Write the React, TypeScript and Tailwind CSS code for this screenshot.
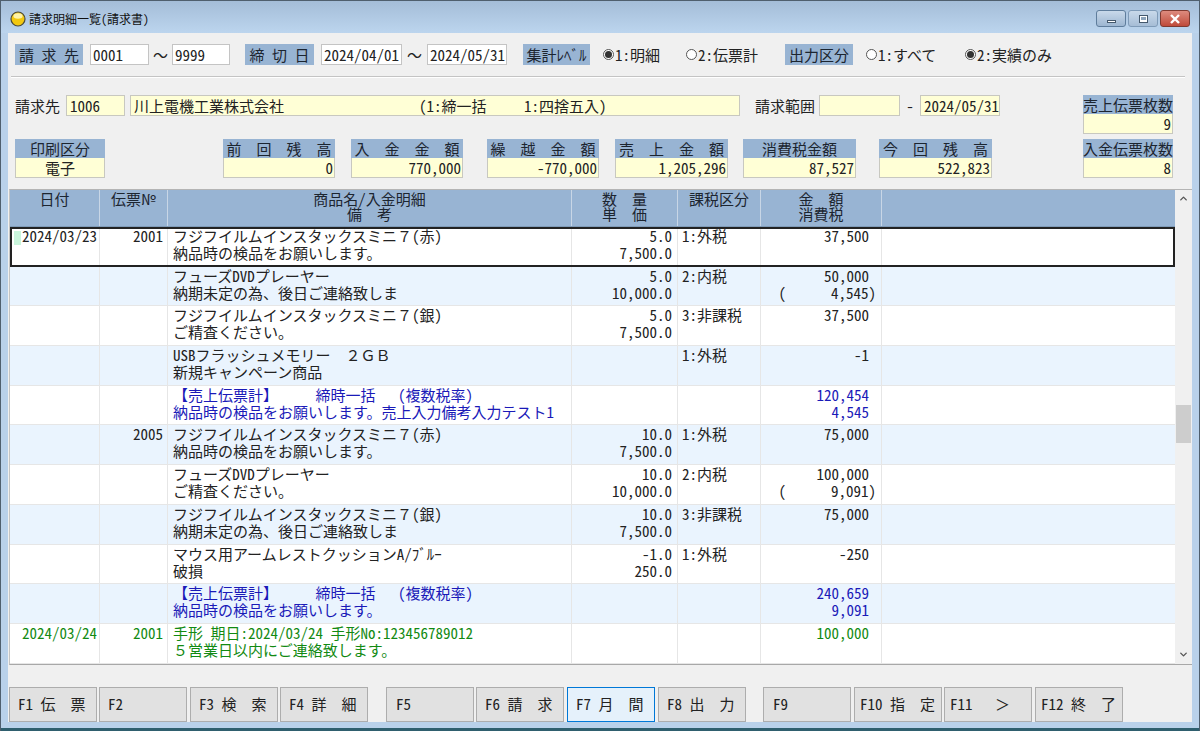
import type { ReactNode } from 'react';
import { ChevronDown, ChevronUp } from 'lucide-react';

// latin runs use the font's half-width glyphs so they sit on the gothic grid
function T({ s }: { s: string }) {
  return (
    <>
      {s.split(/([\x20-\x7e]+)/).map((p, i) =>
        /^[\x20-\x7e]+$/.test(p) ? (
          <span key={i} className="[font-feature-settings:'hwid']">{p}</span>
        ) : (
          p
        ),
      )}
    </>
  );
}

function Label({ s, className }: { s: string; className: string }) {
  return (
    <div className={'h-[21px] bg-[#98b4d3] flex items-center justify-center text-[15px] text-[#1c2530] ' + className}>
      <T s={s} />
    </div>
  );
}

function Input({ s, className }: { s: string; className: string }) {
  return (
    <div className={'h-[21px] bg-white border border-[#c4c4c4] flex items-center pl-[2px] text-[15px] ' + className}>
      <T s={s} />
    </div>
  );
}

function Yellow({ s = '', className }: { s?: string; className: string }) {
  return (
    <div className={'h-[21px] bg-[#ffffd6] border border-[#c8c8c0] flex items-center pl-[3px] text-[15px] ' + className}>
      <T s={s} />
    </div>
  );
}

function Radio({ s, on, className }: { s: string; on?: boolean; className: string }) {
  return (
    <div className={'flex items-center text-[15px] ' + className}>
      <span className="w-[11px] h-[11px] mr-[1px] rounded-full border border-[#555] bg-white flex items-center justify-center">
        {on && <span className="w-[7px] h-[7px] rounded-full bg-[#333]" />}
      </span>
      <T s={s} />
    </div>
  );
}

function Stat({ head, value, center, className }: { head: string; value: string; center?: boolean; className: string }) {
  return (
    <div className={'flex flex-col ' + className}>
      <div className="h-[19px] bg-[#98b4d3] flex items-center justify-center text-[15px] text-[#1c2530]">
        <T s={head} />
      </div>
      <div
        className={
          'h-[20px] bg-[#ffffd6] border border-t-0 border-[#c8c8c0] flex items-center px-[1px] text-[15px] ' +
          (center ? 'justify-center' : 'justify-end')
        }
      >
        <T s={value} />
      </div>
    </div>
  );
}

type Row = {
  date?: string;
  no?: string;
  l1: string;
  l2: string;
  q1?: string;
  q2?: string;
  tax?: string;
  a1?: string;
  a2?: string;
  paren?: boolean;
  kind?: 'total' | 'pay';
};

const rows: Row[] = [
  { date: '2024/03/23', no: '2001', l1: 'フジフイルムインスタックスミニ７(赤)', l2: '納品時の検品をお願いします。', q1: '5.0', q2: '7,500.0', tax: '1:外税', a1: '37,500' },
  { l1: 'フューズDVDプレーヤー', l2: '納期未定の為、後日ご連絡致しま', q1: '5.0', q2: '10,000.0', tax: '2:内税', a1: '50,000', a2: '(      4,545)', paren: true },
  { l1: 'フジフイルムインスタックスミニ７(銀)', l2: 'ご精査ください。', q1: '5.0', q2: '7,500.0', tax: '3:非課税', a1: '37,500' },
  { l1: 'USBフラッシュメモリー　２ＧＢ', l2: '新規キャンペーン商品', tax: '1:外税', a1: '-1' },
  { l1: '【売上伝票計】　　　締時一括　 (複数税率)', l2: '納品時の検品をお願いします。売上入力備考入力テスト1', a1: '120,454', a2: '4,545', kind: 'total' },
  { no: '2005', l1: 'フジフイルムインスタックスミニ７(赤)', l2: '納品時の検品をお願いします。', q1: '10.0', q2: '7,500.0', tax: '1:外税', a1: '75,000' },
  { l1: 'フューズDVDプレーヤー', l2: 'ご精査ください。', q1: '10.0', q2: '10,000.0', tax: '2:内税', a1: '100,000', a2: '(      9,091)', paren: true },
  { l1: 'フジフイルムインスタックスミニ７(銀)', l2: '納期未定の為、後日ご連絡致しま', q1: '10.0', q2: '7,500.0', tax: '3:非課税', a1: '75,000' },
  { l1: 'マウス用アームレストクッションA/ﾌﾞﾙｰ', l2: '破損', q1: '-1.0', q2: '250.0', tax: '1:外税', a1: '-250' },
  { l1: '【売上伝票計】　　　締時一括　 (複数税率)', l2: '納品時の検品をお願いします。', a1: '240,659', a2: '9,091', kind: 'total' },
  { date: '2024/03/24', no: '2001', l1: '手形 期日:2024/03/24 手形No:123456789012', l2: '５営業日以内にご連絡致します。', a1: '100,000', kind: 'pay' },
];

const gridCols = 'grid grid-cols-[90px_68px_404px_106px_83px_121px_1fr]';

function Cell({ children, className = '' }: { children?: ReactNode; className?: string }) {
  return <div className={'border-r border-[#e6e6e6] leading-[17px] ' + className}>{children}</div>;
}

function TableRow({ row, i }: { row: Row; i: number }) {
  const color = row.kind === 'total' ? 'text-[#1a1ab8]' : row.kind === 'pay' ? 'text-[#128a12]' : 'text-[#222]';
  const bg = i % 2 === 1 ? 'bg-[#eaf4fe]' : 'bg-white';
  const sel = i === 0 ? 'relative outline-2 -outline-offset-2 outline-[#222]' : '';
  return (
    <div className={gridCols + ' h-[39.7px] border-b border-[#e6e6e6] ' + bg + ' ' + color + ' ' + sel}>
      <Cell className="pl-[12px]">
        {i === 0 && <span className="absolute left-[4px] top-[4px] w-[7px] h-[14px] bg-[#c9f5dc]" />}
        <T s={row.date ?? ''} />
      </Cell>
      <Cell className="text-right pr-[4px]"><T s={row.no ?? ''} /></Cell>
      <Cell className="pl-[5px]">
        <div><T s={row.l1} /></div>
        <div><T s={row.l2} /></div>
      </Cell>
      <Cell className="text-right pr-[5px]">
        <div><T s={row.q1 ?? ' '} /></div>
        <div><T s={row.q2 ?? ' '} /></div>
      </Cell>
      <Cell className="pl-[4px]"><T s={row.tax ?? ''} /></Cell>
      <Cell className="text-right pr-[12px]">
        <div><T s={row.a1 ?? ' '} /></div>
        <div className={row.paren ? '-mr-[7px]' : ''}><T s={row.a2 ?? ' '} /></div>
      </Cell>
      <div />
    </div>
  );
}

function HeadCell({ a, b }: { a: string; b?: string }) {
  return (
    <div className="border-r border-[#c8d6e6] flex flex-col items-center pt-[1px] leading-[15px] text-[#1c2530]">
      <div><T s={a} /></div>
      {b && <div><T s={b} /></div>}
    </div>
  );
}

function FKey({ s, active, className }: { s: string; active?: boolean; className: string }) {
  return (
    <div
      className={
        'w-[88px] h-[35px] flex items-center text-[15px] border ' +
        (active ? 'bg-[#e5f1fb] border-[#0078d7] ' : 'bg-[#e1e1e1] border-[#adadad] ') +
        className
      }
    >
      <T s={s} />
    </div>
  );
}

export default function App() {
  return (
    <div className="w-[1200px] h-[731px] overflow-hidden flex flex-col bg-[#b9d1ea] border-t border-x border-[#4f5f6e] whitespace-pre text-[15px] text-[#222] font-['Noto_Sans_CJK_JP','Liberation_Sans',sans-serif]">
      {/* title bar */}
      <div className="h-[32px] shrink-0 flex items-start bg-gradient-to-b from-[#a4bdd8] to-[#bcd5ee]">
        <svg viewBox="0 0 16 16" className="w-[16px] h-[16px] ml-[9px] mt-[10px]">
          <circle cx="8" cy="8" r="7" fill="#f2c80f" stroke="#4a4a3a" strokeWidth="1.2" />
          <ellipse cx="8" cy="5" rx="4.6" ry="2.8" fill="#fdf3a8" />
        </svg>
        <div className="ml-[3px] mt-[9px] text-[12px] leading-[18px] text-[#111]">
          <T s="請求明細一覧(請求書)" />
        </div>
        <div className="ml-auto mr-[9px] mt-[9px] flex gap-[2px]">
          <div className="w-[30px] h-[17px] rounded-[3px] border border-[#5f7d9c] bg-gradient-to-b from-[#c9d9ea] to-[#9db6d1] flex items-end justify-center pb-[3px]">
            <span className="w-[9px] h-[3px] bg-white border border-[#44586c]" />
          </div>
          <div className="w-[30px] h-[17px] rounded-[3px] border border-[#7f9bb8] bg-gradient-to-b from-[#c9d9ea] to-[#a6bdd6] flex items-center justify-center">
            <span className="w-[9px] h-[8px] bg-white border border-[#44586c] flex items-center justify-center">
              <span className="w-[5px] h-[3px] bg-[#8ca3ba]" />
            </span>
          </div>
          <div className="w-[30px] h-[17px] rounded-[3px] border border-[#7f3a30] bg-gradient-to-b from-[#dd8b7e] to-[#bf4a3a] flex items-center justify-center">
            <svg viewBox="0 0 12 10" className="w-[12px] h-[10px]">
              <path d="M2 1l8 8M10 1l-8 8" stroke="#fff" strokeWidth="2.4" />
            </svg>
          </div>
        </div>
      </div>

      {/* client area */}
      <div className="flex-1 min-h-0 mx-[7px] bg-[#f0f0f0] flex flex-col">
        <div className="flex items-center mt-[11px] leading-[21px]">
          <Label s="請 求 先" className="ml-[7px] w-[68px]" />
          <Input s="0001" className="ml-[7px] w-[59px]" />
          <div className="w-[23px] text-center"><T s="～" /></div>
          <Input s="9999" className="w-[58px]" />
          <Label s="締 切 日" className="ml-[15px] w-[69px]" />
          <Input s="2024/04/01" className="ml-[7px] w-[81px]" />
          <div className="w-[25px] text-center"><T s="～" /></div>
          <Input s="2024/05/31" className="w-[80px]" />
          <Label s="集計ﾚﾍﾞﾙ" className="ml-[16px] w-[67px]" />
          <Radio s="1:明細" on className="ml-[13px] w-[83px]" />
          <Radio s="2:伝票計" className="w-[99px]" />
          <Label s="出力区分" className="w-[68px]" />
          <Radio s="1:すべて" className="ml-[13px] w-[99px]" />
          <Radio s="2:実績のみ" on className="w-[100px]" />
        </div>

        <div className="mt-[11px] ml-[3px] mr-[7px] h-[2px] bg-[#c4c4c4] border-b border-white" />

        <div className="flex mt-[17px] leading-[21px]">
          <div className="flex-1">
            <div className="flex items-center h-[21px]">
              <div className="ml-[7px] w-[51px]"><T s="請求先" /></div>
              <Yellow s="1006" className="w-[59px]" />
              <Yellow
                s="川上電機工業株式会社　　　　　　　　　(1:締一括　　 1:四捨五入)"
                className="ml-[5px] w-[610px]"
              />
              <div className="ml-[15px] w-[64px]"><T s="請求範囲" /></div>
              <Yellow className="w-[81px]" />
              <div className="w-[20px] text-center"><T s="-" /></div>
              <Yellow s="2024/05/31" className="w-[80px]" />
            </div>
            <div className="flex mt-[23px]">
              <Stat head="印刷区分" value="電子" center className="ml-[7px] w-[90px]" />
              <Stat head="前　回　残　高" value="0" className="ml-[118px] w-[112px]" />
              <Stat head="入　金　金　額" value="770,000" className="ml-[16px] w-[112px]" />
              <Stat head="繰　越　金　額" value="-770,000" className="ml-[24px] w-[112px]" />
              <Stat head="売　上　金　額" value="1,205,296" className="ml-[16px] w-[113px]" />
              <Stat head="消費税金額" value="87,527" className="ml-[15px] w-[113px]" />
              <Stat head="今　回　残　高" value="522,823" className="ml-[23px] w-[113px]" />
            </div>
          </div>
          <div className="w-[90px] mr-[19px] flex flex-col gap-[5px]">
            <Stat head="売上伝票枚数" value="9" className="w-[90px]" />
            <Stat head="入金伝票枚数" value="8" className="w-[90px]" />
          </div>
        </div>

        {/* detail grid */}
        <div className="mt-[11px] ml-[1px] h-[476px] flex border-t border-[#b4b4b4] border-b border-l border-b-[#a8a8a8] border-l-[#c4c4c4]">
          <div className="flex-1 min-w-0 text-[15px]">
            <div className={gridCols + ' h-[37px] bg-[#98b4d3] border-b border-[#7f9bb8]'}>
              <HeadCell a="日付" />
              <HeadCell a="伝票№" />
              <HeadCell a="商品名/入金明細" b="備　考" />
              <HeadCell a="数　量" b="単　価" />
              <HeadCell a="課税区分" />
              <HeadCell a="金　額" b="消費税" />
              <div />
            </div>
            {rows.map((row, i) => (
              <TableRow key={i} row={row} i={i} />
            ))}
          </div>
          <div className="w-[17px] shrink-0 bg-[#f0f0f0] flex flex-col items-center">
            <ChevronUp className="mt-[3px] w-[11px] h-[11px] text-[#555]" strokeWidth={3} />
            <div className="mt-[201px] w-[15px] h-[38px] bg-[#cdcdcd]" />
            <ChevronDown className="mt-auto mb-[4px] w-[11px] h-[11px] text-[#555]" strokeWidth={3} />
          </div>
        </div>

        {/* function keys */}
        <div className="flex mt-[22px] ml-[1px]">
          <FKey s="F1 伝　票" className="pl-[8px]" />
          <FKey s="F2" className="ml-[2px] pl-[8px]" />
          <FKey s="F3 検　索" className="ml-[3px] pl-[8px]" />
          <FKey s="F4 詳　細" className="ml-[2px] pl-[8px]" />
          <FKey s="F5" className="ml-[18px] pl-[9px]" />
          <FKey s="F6 請　求" className="ml-[2px] pl-[8px]" />
          <FKey s="F7 月　間" active className="ml-[3px] pl-[8px]" />
          <FKey s="F8 出　力" className="ml-[3px] pl-[8px]" />
          <FKey s="F9" className="ml-[17px] pl-[9px]" />
          <FKey s="F10 指　定" className="ml-[3px] pl-[5px]" />
          <FKey s="F11　 ＞" className="ml-[2px] pl-[5px]" />
          <FKey s="F12 終　了" className="ml-[3px] pl-[5px]" />
        </div>
      </div>

      <div className="h-[9px] shrink-0 flex flex-col">
        <div className="h-[6px] bg-[#b9d1ea]" />
        <div className="h-[3px] bg-[#2f5f6e]" />
      </div>
    </div>
  );
}
